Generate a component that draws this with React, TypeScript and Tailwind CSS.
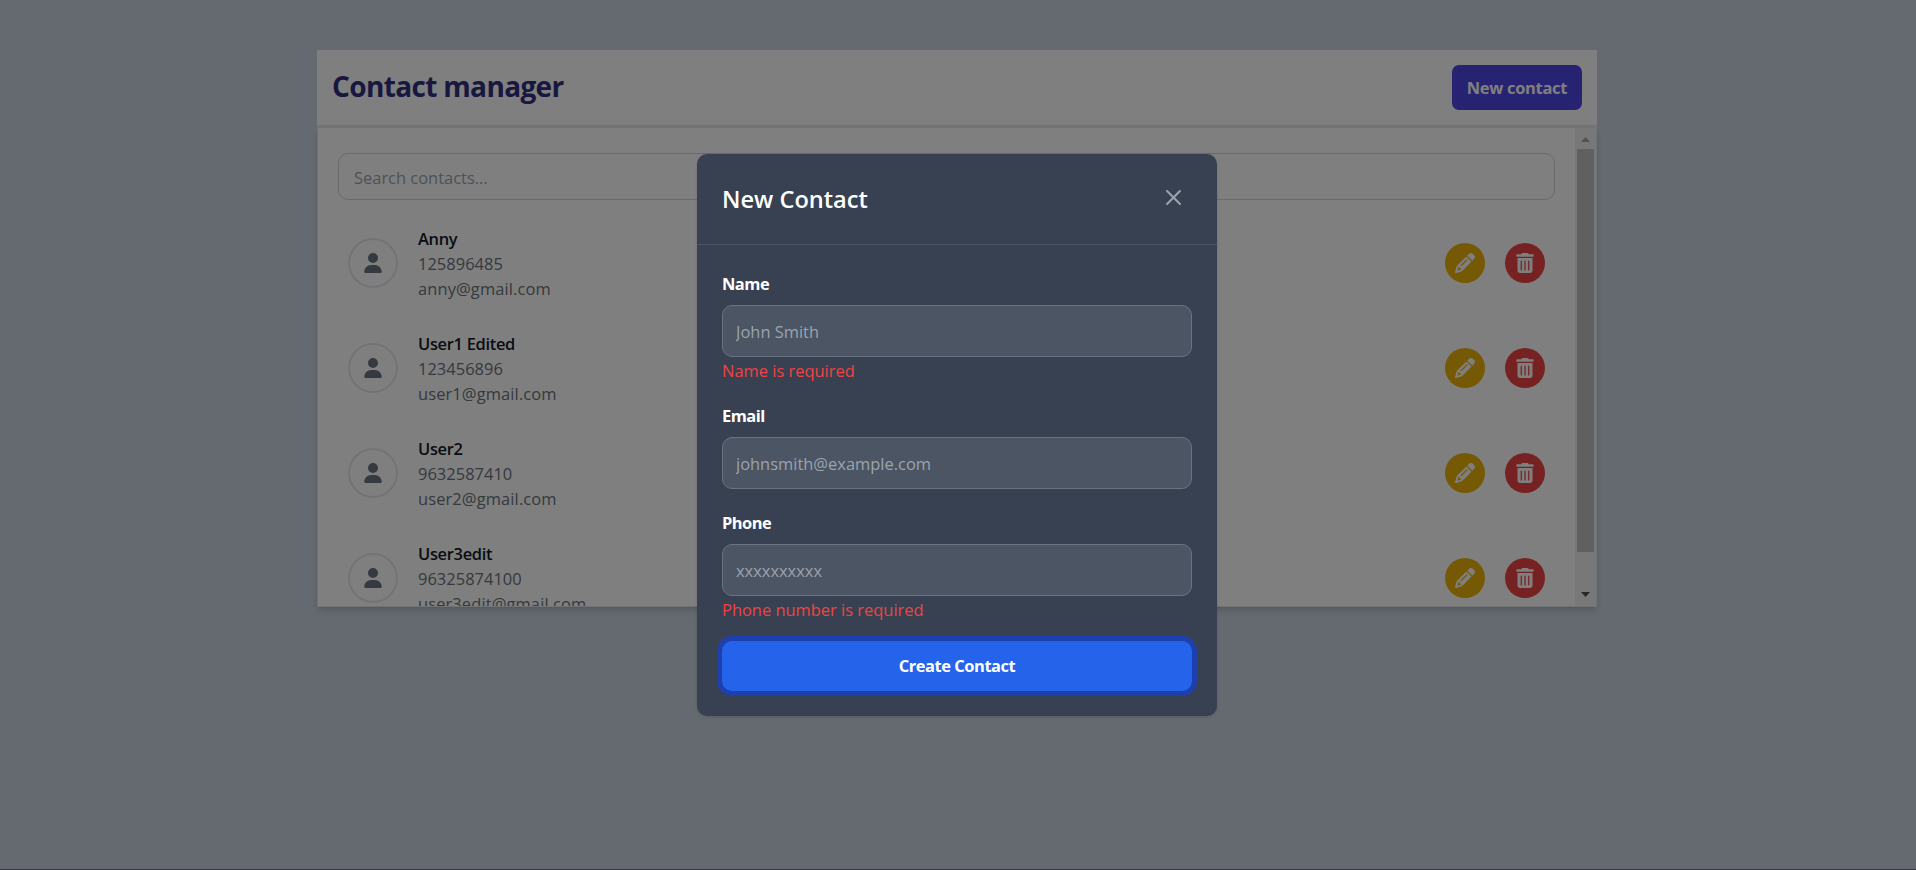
import React from "react";
import { FaPencil, FaTrashCan, FaUser } from "react-icons/fa6";

const contacts = [
  { name: "Anny", phone: "125896485", email: "anny@gmail.com" },
  { name: "User1 Edited", phone: "123456896", email: "user1@gmail.com" },
  { name: "User2", phone: "9632587410", email: "user2@gmail.com" },
  { name: "User3edit", phone: "96325874100", email: "user3edit@gmail.com" },
];

type Contact = (typeof contacts)[number];

function ContactRow({ contact }: { contact: Contact }) {
  return (
    <li className="flex h-[105px] shrink-0 items-center justify-between px-2.5">
      <div className="flex items-center gap-5">
        <div className="flex size-[50px] items-center justify-center rounded-full border-2 border-[#e5e7eb] text-[#6b7280]">
          <FaUser size={20} />
        </div>
        <div className="pt-px leading-[25px] text-[#6b7280]">
          <p className="font-semibold tracking-[-0.3px] text-[#111827]">{contact.name}</p>
          <p className="tracking-[0.03px]">{contact.phone}</p>
          <p className="tracking-[0.12px]">{contact.email}</p>
        </div>
      </div>
      <div className="flex gap-5 text-white">
        <button className="flex size-10 items-center justify-center rounded-full bg-[#eab308]">
          <FaPencil size={20} />
        </button>
        <button className="flex size-10 items-center justify-center rounded-full bg-[#ef4444]">
          <FaTrashCan size={20} />
        </button>
      </div>
    </li>
  );
}

function Scrollbar() {
  return (
    <div className="flex w-[21px] shrink-0 flex-col items-center bg-[#f1f1f1]">
      <svg className="h-[21px] w-[21px]" viewBox="0 0 21 21">
        <path d="M6 14h9l-4.5-5z" fill="#a3a3a3" />
      </svg>
      <div className="h-[403px] w-[17px] bg-[#c1c1c1]" />
      <div className="flex-1" />
      <svg className="h-[21px] w-[21px]" viewBox="0 0 21 21">
        <path d="M6 7h9l-4.5 5z" fill="#505050" />
      </svg>
    </div>
  );
}

interface FieldProps {
  label: string;
  placeholder: string;
  error?: string;
}

function Field({ label, placeholder, error }: FieldProps) {
  return (
    <div>
      <label className="mb-[9px] block font-bold leading-[25px] tracking-[-0.5px] text-white">{label}</label>
      <input
        placeholder={placeholder}
        className="block h-[52px] w-full rounded-[10px] border border-[#6b7280] bg-[#4b5563] px-[13px] placeholder:text-[#9ca3af]"
      />
      {error && <p className="mt-px leading-[25px] text-[#ef4444]">{error}</p>}
    </div>
  );
}

function NewContactDialog() {
  return (
    <div className="w-[520px] rounded-[10px] bg-[#374151] shadow">
      <div className="flex h-[91px] items-center justify-between border-b border-[#4b5563] px-[25px]">
        <h3 className="pt-px text-[23.6px] font-semibold leading-[35px] text-white">New Contact</h3>
        <button className="flex size-[38px] items-center justify-center text-[#9ca3af]">
          <svg className="mb-[3px] size-[15px]" viewBox="0 0 14 14" fill="none">
            <path
              d="m1 1 6 6m0 0 6 6M7 7l6-6M7 7l-6 6"
              stroke="currentColor"
              strokeWidth="1.9"
              strokeLinecap="round"
              strokeLinejoin="round"
            />
          </svg>
        </button>
      </div>
      <form className="flex flex-col px-[25px] pb-[25px] pt-[26px]">
        <Field label="Name" placeholder="John Smith" error="Name is required" />
        <div className="h-5" />
        <Field label="Email" placeholder="johnsmith@example.com" />
        <div className="h-[21px]" />
        <Field label="Phone" placeholder="xxxxxxxxxx" error="Phone number is required" />
        <button
          type="button"
          className="mt-[19px] h-[50px] rounded-[10px] bg-[#2563eb] pt-px font-bold tracking-[-0.45px] text-white ring-[5px] ring-[#1e40af]"
        >
          Create Contact
        </button>
      </form>
    </div>
  );
}

export default function App() {
  return (
    <div className="relative h-[870px] overflow-hidden bg-[#cbd5e1] font-['Open_Sans','Noto_Sans',sans-serif] text-[16.45px]">
      <main className="ml-[317px] w-[1280px] pt-[50px]">
        <header className="flex h-[77px] items-center justify-between border-b-2 border-[#e5e7eb] bg-white px-[15px]">
          <h1 className="pb-[3px] text-[28px] font-bold leading-9 tracking-[-0.65px] text-[#312e81]">Contact manager</h1>
          <button className="h-[45px] rounded-[7px] bg-[#4f46e5] px-[15px] pt-0.5 font-bold tracking-[-0.3px] text-white">
            New contact
          </button>
        </header>
        <section className="flex h-[480px] border border-[#e5e7eb] bg-white shadow-[0_5px_8px_-1px_rgba(0,0,0,0.12),0_2px_5px_-2px_rgba(0,0,0,0.12)]">
          <div className="min-w-0 flex-1 overflow-hidden px-5 pt-[25px]">
            <input
              placeholder="Search contacts..."
              className="mb-[10px] block h-[47px] w-full rounded-[10px] border border-[#d1d5db] px-[15px] pt-px placeholder:text-[#9ca3af]"
            />
            <ul className="flex flex-col">
              {contacts.map((c) => (
                <ContactRow key={c.name} contact={c} />
              ))}
            </ul>
          </div>
          <Scrollbar />
        </section>
      </main>
      <div className="absolute inset-0 flex items-start justify-center border-b border-[#37373b] bg-black/50 pr-0.5 pt-[154px]">
        <NewContactDialog />
      </div>
    </div>
  );
}
